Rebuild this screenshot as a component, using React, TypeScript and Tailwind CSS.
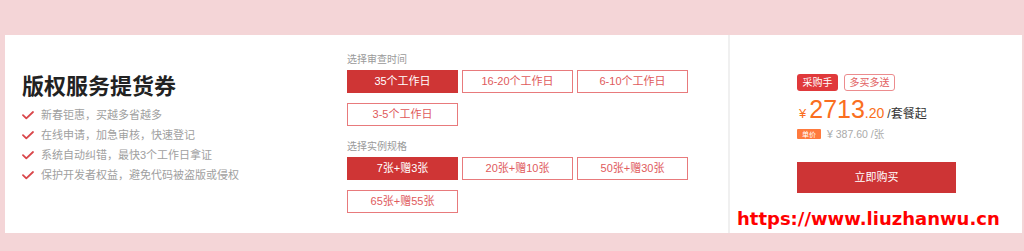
import React, { useState } from "react";

const features = [
  "新春钜惠，买越多省越多",
  "在线申请，加急审核，快速登记",
  "系统自动纠错，最快3个工作日拿证",
  "保护开发者权益，避免代码被盗版或侵权",
];

const periods = ["35个工作日", "16-20个工作日", "6-10个工作日", "3-5个工作日"];
const specs = ["7张+赠3张", "20张+赠10张", "50张+赠30张", "65张+赠55张"];

function Check() {
  return (
    <svg width="12" height="9" viewBox="0 0 12 9" className="shrink-0">
      <polyline
        points="1,4.2 4.3,7.4 11,1"
        fill="none"
        stroke="#d9464a"
        strokeWidth="1.8"
        strokeLinecap="round"
        strokeLinejoin="round"
      />
    </svg>
  );
}

function OptionGroup({
  label,
  options,
  active,
  onPick,
}: {
  label: string;
  options: string[];
  active: number;
  onPick: (i: number) => void;
}) {
  return (
    <div>
      <p className="h-[14px] text-[10px] leading-[14px] text-[#9a9a9a]">{label}</p>
      <div className="mt-[3px] grid grid-cols-[111px_111px_111px] gap-x-[4px] gap-y-[10px]">
        {options.map((opt, i) => {
          const isActive = i === active;
          return (
            <button
              key={opt}
              type="button"
              onClick={() => onPick(i)}
              className={`h-[23px] text-[11px] leading-none border ${
                isActive
                  ? "bg-[#cf3535] border-[#cf3535] text-white"
                  : "bg-white border-[#e87a7c] text-[#e05a5c]"
              }`}
            >
              {opt}
            </button>
          );
        })}
      </div>
    </div>
  );
}

export default function App() {
  const [period, setPeriod] = useState(0);
  const [spec, setSpec] = useState(0);

  return (
    <div
      className="h-[251px] w-[1024px] bg-[#f4d5d7] pt-[35px] pl-[5px] pr-[2px]"
      style={{ fontFamily: '"Liberation Sans", "Noto Sans CJK SC", sans-serif' }}
    >
      <div className="relative flex h-[198px] bg-white">
        {/* left: title + options */}
        <div className="flex w-[725px] border-r-2 border-[#f0f0f0]">
          <div className="w-[342px] pl-[17px] pt-[38px]">
            <h1 className="text-[22px] font-bold leading-[28px] text-[#222]">版权服务提货券</h1>
            <ul className="mt-[4px]">
              {features.map((f) => (
                <li key={f} className="flex h-[20px] items-center gap-[7px] text-[11px] text-[#a0a0a0]">
                  <Check />
                  <span>{f}</span>
                </li>
              ))}
            </ul>
          </div>

          <div className="pt-[18px]">
            <OptionGroup label="选择审查时间" options={periods} active={period} onPick={setPeriod} />
            <div className="mt-[14px]">
              <OptionGroup label="选择实例规格" options={specs} active={spec} onPick={setSpec} />
            </div>
          </div>
        </div>

        {/* right: price + buy */}
        <div className="flex-1 pl-[67px] pt-[39px]">
          <div className="flex h-[17px] gap-[6px]">
            <span className="flex w-[41px] items-center justify-center rounded-[3px] bg-[#e0393b] text-[10px] text-white">
              采购手
            </span>
            <span className="flex w-[51px] items-center justify-center rounded-[3px] border border-[#ec8c8e] text-[10px] text-[#e25f62]">
              多买多送
            </span>
          </div>

          <div className="mt-[6px] flex h-[24px] items-baseline text-[#fa6e20]">
            <span className="ml-[2px] mr-[3px] text-[13px]">¥</span>
            <span className="text-[25px] leading-[24px]">2713</span>
            <span className="text-[14px]">.20</span>
            <span className="ml-[3px] text-[12px] text-[#333]">/套餐起</span>
          </div>

          <div className="mt-[8px] flex h-[10px] items-center gap-[6px]">
            <span className="flex h-[10px] w-[24px] items-center justify-center rounded-[1px] bg-[#ff7a3d] text-[7px] leading-none text-white">
              单价
            </span>
            <span className="text-[10.5px] leading-none text-[#aaa]">¥ 387.60 /张</span>
          </div>

          <button
            type="button"
            className="mt-[23px] h-[31px] w-[159px] bg-[#cd3435] text-[11px] text-white"
          >
            立即购买
          </button>
        </div>

        {/* watermark */}
        <span
          className="absolute left-[732px] top-[172px] text-[18px] font-bold leading-[24px] text-[#ff0000]"
          style={{ fontFamily: '"DejaVu Sans", sans-serif' }}
        >
          https://www.liuzhanwu.cn
        </span>
      </div>
    </div>
  );
}
